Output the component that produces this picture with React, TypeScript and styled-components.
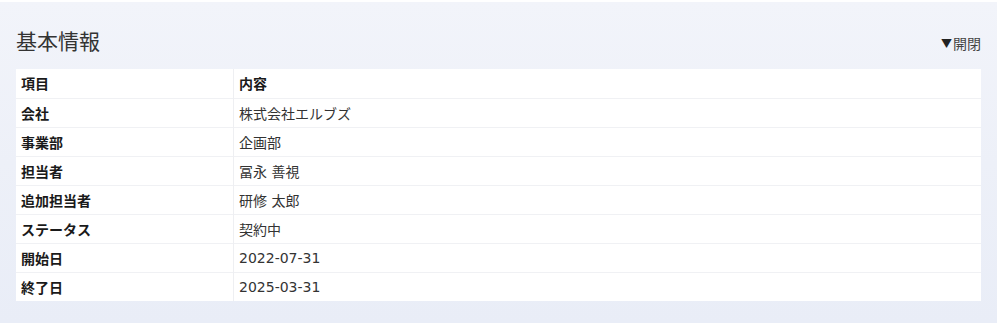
import React from "react";
import styled, { createGlobalStyle } from "styled-components";

const GlobalStyle = createGlobalStyle`
  html, body {
    margin: 0;
    padding: 0;
    background: #ffffff;
  }
  body {
    font-family: "Noto Sans CJK JP", "Noto Sans", sans-serif;
    color: #222;
  }
`;

const Panel = styled.section`
  box-sizing: border-box;
  width: 997px;
  height: 321px;
  margin-top: 2px;
  padding: 0 16px;
  background: linear-gradient(180deg, #f2f4fa 0%, #edf0f8 50%, #e9edf7 100%);
  display: flex;
  flex-direction: column;
`;

const Header = styled.header`
  box-sizing: border-box;
  height: 67px;
  padding-bottom: 18px;
  display: flex;
  align-items: flex-end;
  justify-content: space-between;
`;

const Title = styled.h2`
  margin: 0;
  font-size: 21px;
  font-weight: 400;
  color: #333;
  line-height: 1;
`;

const Toggle = styled.button`
  border: none;
  background: none;
  padding: 0;
  margin-bottom: 1px;
  font-family: inherit;
  font-size: 14px;
  line-height: 1;
  color: #444;
  cursor: pointer;
  display: flex;
  align-items: center;
  gap: 1px;
`;

const Caret = styled.span`
  font-size: 11px;
  color: #222;
`;

const Table = styled.table`
  width: 965px;
  border-collapse: collapse;
  background: #ffffff;
  font-family: "DejaVu Sans", "Noto Sans CJK JP", sans-serif;
  font-size: 14px;
`;

const Row = styled.tr`
  height: 29px;
  & + & {
    border-top: 1px solid #f0f1f4;
  }
`;

const Cell = styled.td<{ $head?: boolean }>`
  padding: 0 5px;
  font-weight: ${(p) => (p.$head ? 700 : 400)};
  color: ${(p) => (p.$head ? "#1a1a1a" : "#333")};
  &:first-child {
    width: 207px;
    border-right: 1px solid #eeeff2;
  }
`;

const rows: [string, string][] = [
  ["会社", "株式会社エルブズ"],
  ["事業部", "企画部"],
  ["担当者", "冨永 善視"],
  ["追加担当者", "研修 太郎"],
  ["ステータス", "契約中"],
  ["開始日", "2022-07-31"],
  ["終了日", "2025-03-31"],
];

export default function App() {
  return (
    <>
      <GlobalStyle />
      <Panel>
        <Header>
          <Title>基本情報</Title>
          <Toggle type="button">
            <Caret>▼</Caret>開閉
          </Toggle>
        </Header>
        <Table>
          <tbody>
            <Row>
              <Cell $head>項目</Cell>
              <Cell $head>内容</Cell>
            </Row>
            {rows.map(([label, value]) => (
              <Row key={label}>
                <Cell $head>{label}</Cell>
                <Cell>{value}</Cell>
              </Row>
            ))}
          </tbody>
        </Table>
      </Panel>
    </>
  );
}
